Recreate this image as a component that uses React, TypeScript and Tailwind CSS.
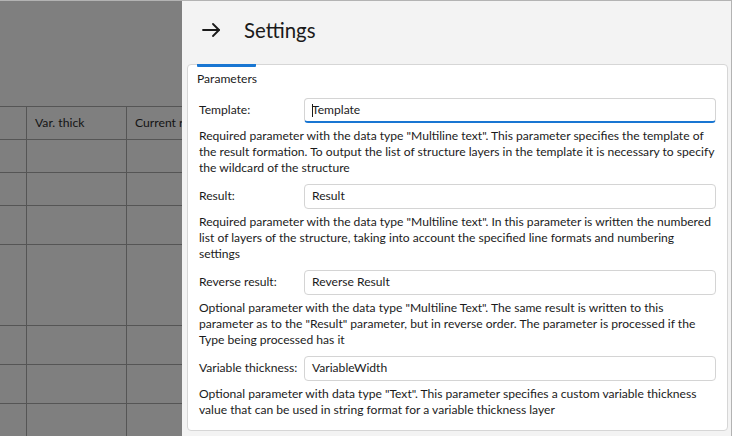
import React from 'react';

const params = [
    {
        label: 'Template:',
        value: 'Template',
        focused: true,
        desc: [
            'Required parameter with the data type "Multiline text". This parameter specifies the template of',
            'the result formation. To output the list of structure layers in the template it is necessary to specify',
            'the wildcard of the structure',
        ],
    },
    {
        label: 'Result:',
        value: 'Result',
        desc: [
            'Required parameter with the data type "Multiline text". In this parameter is written the numbered',
            'list of layers of the structure, taking into account the specified line formats and numbering',
            'settings',
        ],
    },
    {
        label: 'Reverse result:',
        value: 'Reverse Result',
        desc: [
            'Optional parameter with the data type "Multiline Text". The same result is written to this',
            'parameter as to the "Result" parameter, but in reverse order. The parameter is processed if the',
            'Type being processed has it',
        ],
    },
    {
        label: 'Variable thickness:',
        value: 'VariableWidth',
        desc: [
            'Optional parameter with data type "Text". This parameter specifies a custom variable thickness',
            'value that can be used in string format for a variable thickness layer',
        ],
    },
];

const rowHeights = [33, 33, 39, 81, 39, 39, 39];

export default function App() {
    return (
        <div className="w-[732px] h-[436px] flex overflow-hidden border-t border-[#b3b3b3] text-[#1b1b1b] font-['Lato','Noto_Sans',sans-serif]">
            {/* dimmed table behind the panel */}
            <div className="w-[182px] shrink-0 bg-[#7f7f7f] overflow-hidden">
                <div className="h-[105px]" />
                <div className="w-[300px]">
                    <div className="flex h-[33px] border-t border-[#555555] text-[12.2px] text-[#141414]">
                        <div className="w-[27px] border-r border-[#555555]" />
                        <div className="w-[100px] border-r border-[#555555] pl-[8px] flex items-center">Var. thick</div>
                        <div className="flex-1 pl-[8px] flex items-center">Current r</div>
                    </div>
                    {rowHeights.map((h, i) => (
                        <div key={i} className="flex border-t border-[#555555]" style={{ height: h }}>
                            <div className="w-[27px] border-r border-[#555555]" />
                            <div className="w-[100px] border-r border-[#555555]" />
                            <div className="flex-1" />
                        </div>
                    ))}
                </div>
            </div>

            {/* settings panel */}
            <div className="flex-1 flex flex-col bg-[#f3f3f3] border-r border-[#b3b3b3] pl-[5px] pr-[3px]">
                <div className="h-[63px] shrink-0 flex items-center pl-[15px] pb-[5px]">
                    <svg width="18" height="14" viewBox="0 0 18 14" fill="none" stroke="#1a1a1a" strokeWidth="1.8" strokeLinecap="round" strokeLinejoin="round">
                        <path d="M1 7h16" />
                        <path d="M11 1l6 6-6 6" />
                    </svg>
                    <span className="ml-[24px] text-[20.4px] leading-none text-[#1a1a1a]">Settings</span>
                </div>

                <div className="h-[367px] bg-white border border-[#d6d6d6] rounded-[4px] px-[11px] text-[12.1px]">
                    <div className="w-[59px] h-[3px] -mt-px -ml-[2px] bg-[#1976d2] rounded-b-[1px]" />
                    <div className="mt-[4px] -ml-[2px] leading-[16px]">Parameters</div>

                    <div className="mt-[11px] flex flex-col gap-[8px]">
                        {params.map(p => (
                            <div key={p.label}>
                                <div className="flex items-center">
                                    <div className="w-[105px] shrink-0">{p.label}</div>
                                    <div
                                        className={`flex-1 h-[25px] rounded-[4px] border border-[#d4d4d4] pl-[7px] flex items-center ${
                                            p.focused ? 'border-b-2 border-b-[#1976d2]' : ''
                                        }`}
                                    >
                                        {p.focused && <span className="w-px h-[13px] bg-[#1b1b1b] -mr-px" />}
                                        {p.value}
                                    </div>
                                </div>
                                <div className="mt-[5px] leading-[16px] whitespace-nowrap">
                                    {p.desc.map(l => (
                                        <div key={l}>{l}</div>
                                    ))}
                                </div>
                            </div>
                        ))}
                    </div>
                </div>
            </div>
        </div>
    );
}
